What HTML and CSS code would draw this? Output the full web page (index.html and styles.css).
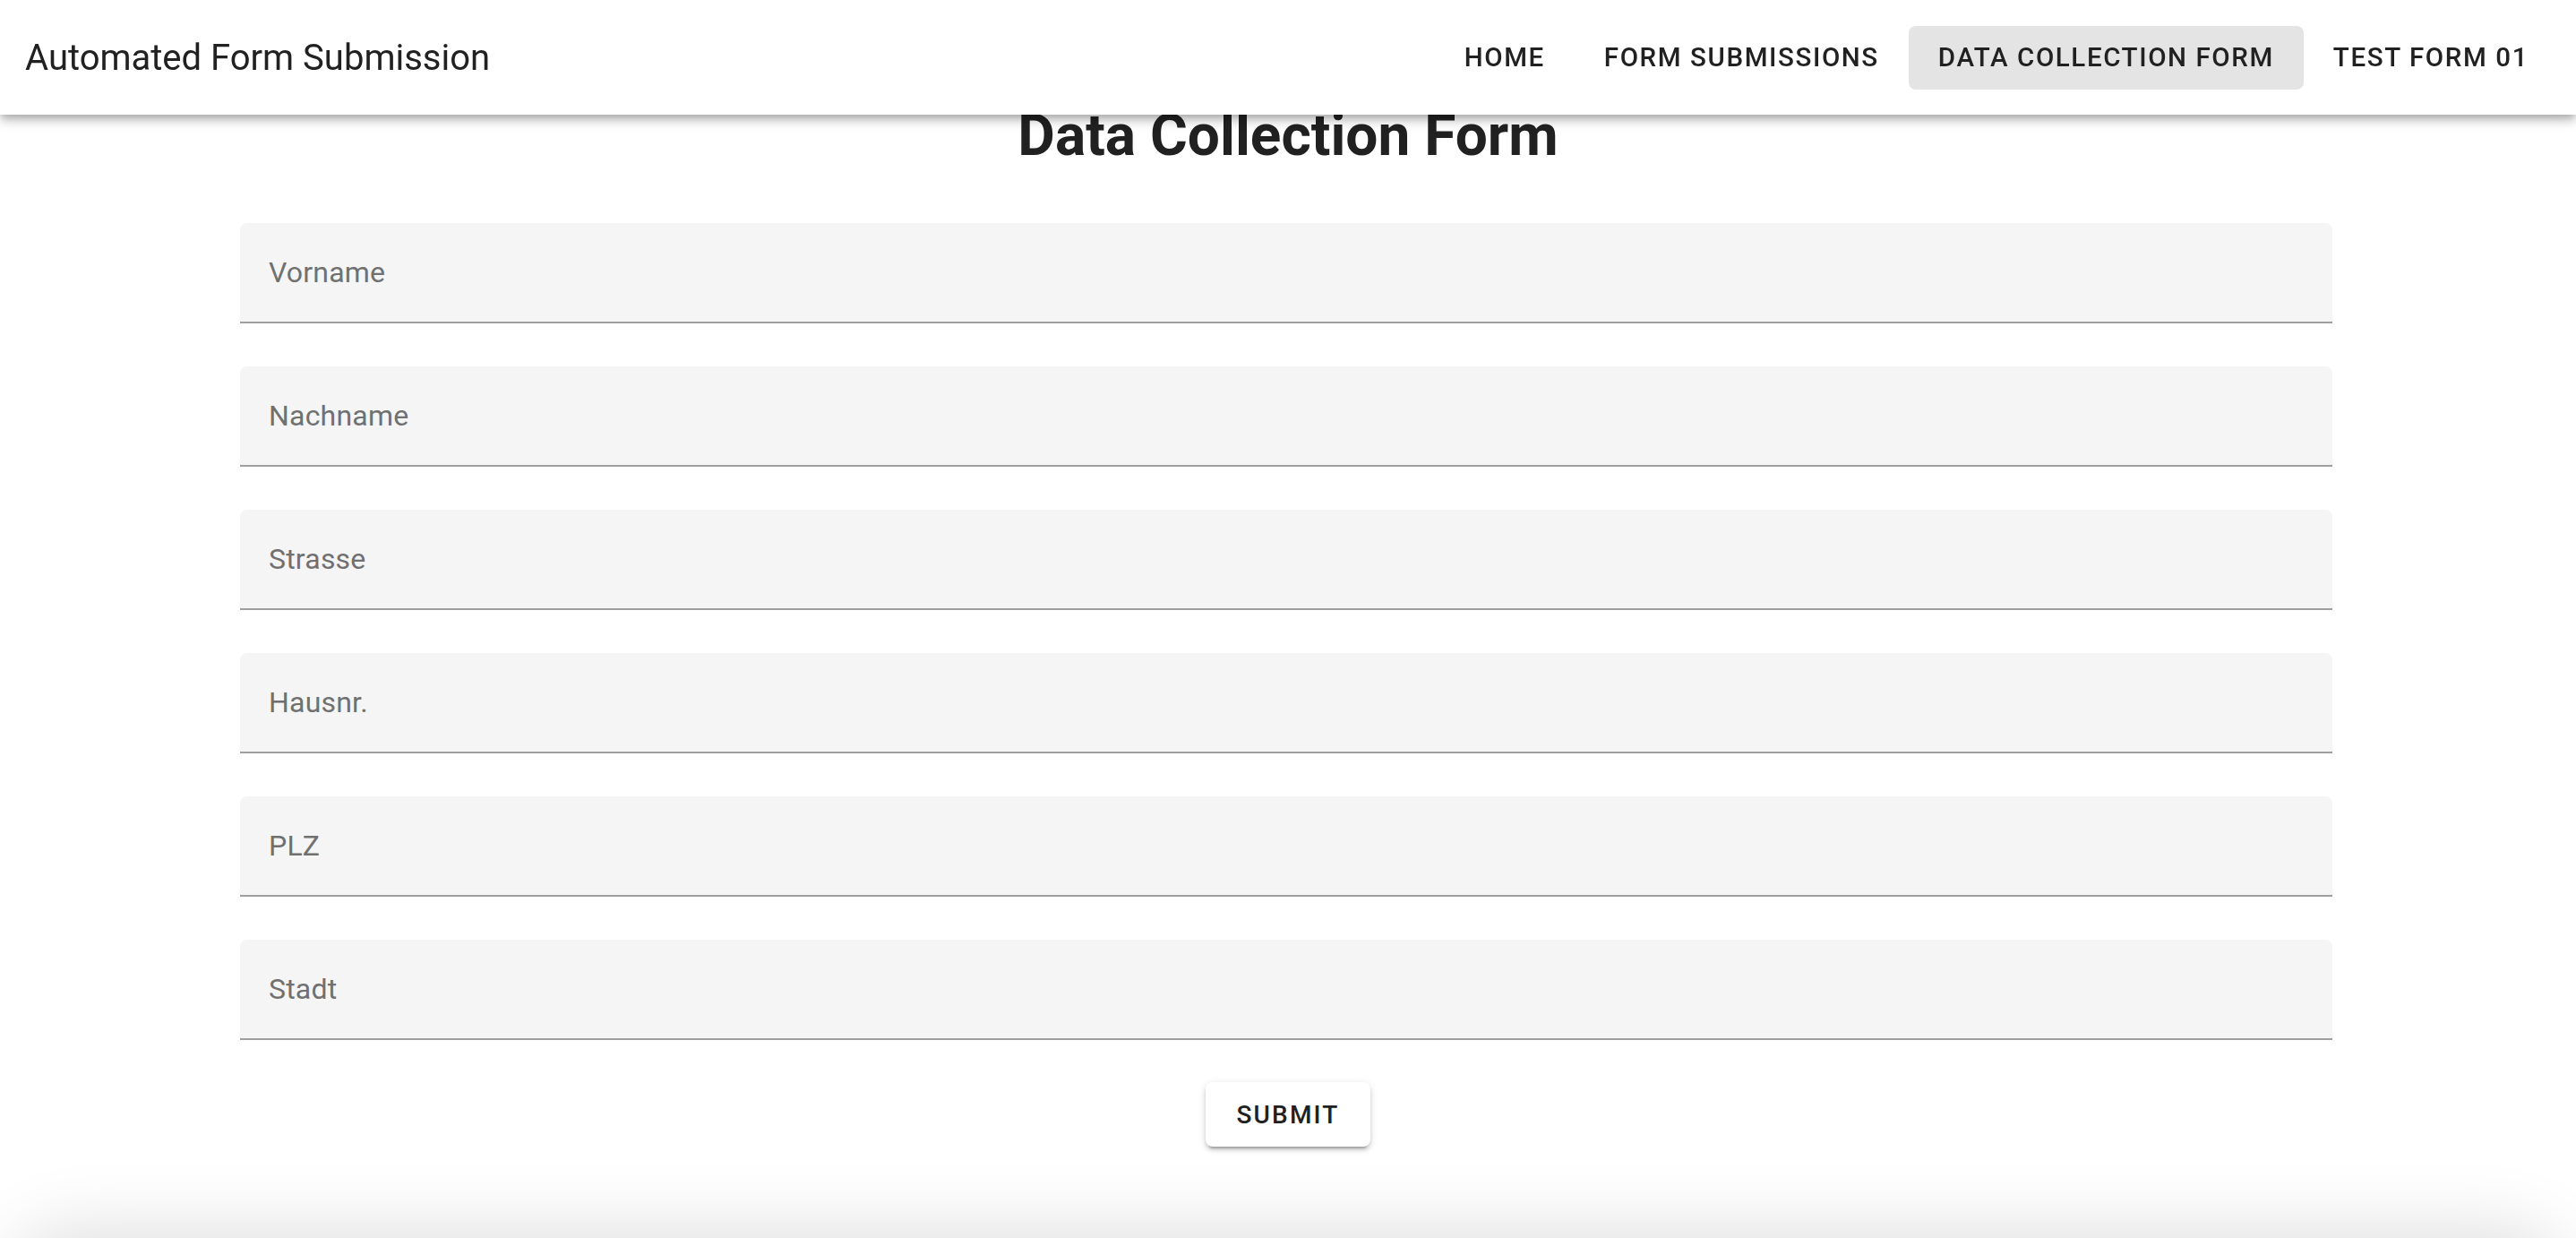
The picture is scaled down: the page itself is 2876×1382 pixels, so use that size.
FILE: index.html
```html
<!DOCTYPE html>
<html lang="de">
<head>
<meta charset="utf-8">
<title>Automated Form Submission</title>
<link rel="stylesheet" href="styles.css">
</head>
<body>
<header class="appbar">
  <div class="brand">Automated Form Submission</div>
  <nav class="nav">
    <a class="nav-btn">Home</a>
    <a class="nav-btn">Form Submissions</a>
    <a class="nav-btn active">Data Collection Form</a>
    <a class="nav-btn">Test Form 01</a>
  </nav>
</header>
<main class="page">
  <h1 class="heading">Data Collection Form</h1>
  <form class="form">
    <div class="field"><span class="label">Vorname</span></div>
    <div class="field"><span class="label">Nachname</span></div>
    <div class="field"><span class="label">Strasse</span></div>
    <div class="field"><span class="label">Hausnr.</span></div>
    <div class="field"><span class="label">PLZ</span></div>
    <div class="field"><span class="label">Stadt</span></div>
  </form>
  <button class="submit" type="button">Submit</button>
</main>
<footer class="footer"></footer>
</body>
</html>
```
FILE: styles.css
```css
html, body {
  margin: 0;
  padding: 0;
  overflow: hidden;
  background: #ffffff;
}
body {
  font-family: Roboto, "Liberation Sans", sans-serif;
  color: #212121;
}
.appbar {
  position: fixed;
  top: 0;
  left: 0;
  right: 0;
  height: 128px;
  box-sizing: border-box;
  display: flex;
  align-items: center;
  padding: 0 20px 0 28px;
  background: #ffffff;
  z-index: 10;
  box-shadow: 0 4px 8px -2px rgba(0,0,0,0.2), 0 8px 10px 0 rgba(0,0,0,0.14), 0 2px 20px 0 rgba(0,0,0,0.12);
}
.brand {
  flex: 1;
  font-size: 40px;
  font-weight: 400;
  letter-spacing: 0;
  color: #212121;
}
.nav {
  display: flex;
  align-items: center;
}
.nav-btn {
  display: flex;
  align-items: center;
  height: 71px;
  padding: 0 33px;
  border-radius: 8px;
  font-size: 29.5px;
  font-weight: 500;
  letter-spacing: 1.6px;
  text-transform: uppercase;
  color: #212121;
}
.nav-btn.active {
  background: #e4e4e4;
}
.page {
  display: flex;
  flex-direction: column;
  align-items: center;
  padding-top: 110px;
}
.heading {
  margin: 0;
  font-size: 64px;
  line-height: 84px;
  font-weight: 700;
  color: #212121;
}
.form {
  width: 2336px;
  margin-top: 55px;
  margin-right: 4px;
  display: flex;
  flex-direction: column;
  gap: 48px;
}
.field {
  height: 110px;
  box-sizing: content-box;
  display: flex;
  align-items: center;
  padding-left: 32px;
  background: #f5f5f5;
  border-radius: 8px 8px 0 0;
  border-bottom: 2px solid #9e9e9e;
}
.label {
  font-size: 32px;
  color: #707070;
  letter-spacing: 0.2px;
}
.submit {
  margin-top: 47px;
  height: 72px;
  padding: 0 34px;
  border: none;
  border-radius: 8px;
  background: #ffffff;
  font-family: Roboto, "Liberation Sans", sans-serif;
  font-size: 28px;
  font-weight: 500;
  letter-spacing: 2.2px;
  text-transform: uppercase;
  color: #212121;
  box-shadow: 0 6px 2px -4px rgba(0,0,0,0.2), 0 4px 4px 0 rgba(0,0,0,0.14), 0 2px 10px 0 rgba(0,0,0,0.12);
}
.footer {
  height: 200px;
  margin: 102px 20px 0;
  border-radius: 60px;
  background: #ffffff;
  box-shadow: 0 0 80px 10px rgba(0,0,0,0.13);
}
```
